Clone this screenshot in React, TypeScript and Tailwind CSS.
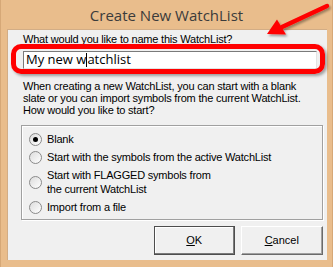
import React from "react";

const options = [
  { label: ["Blank"], checked: true },
  { label: ["Start with the symbols from the active WatchList"], checked: false },
  { label: ["Start with FLAGGED symbols from", "the current WatchList"], checked: false },
  { label: ["Import from a file"], checked: false },
];

function Radio({ checked }: { checked: boolean }) {
  return (
    <span className="flex h-[13px] w-[13px] shrink-0 items-center justify-center rounded-full border border-[#8a8a8a] bg-gradient-to-br from-[#dcdcdc] to-white">
      {checked && <span className="h-[5px] w-[5px] rounded-full bg-black" />}
    </span>
  );
}

export default function App() {
  return (
    <div className="relative h-[267px] w-[333px] overflow-hidden border-l border-r border-[#d6a877] bg-[#e9bd8c] font-['Liberation_Sans',sans-serif] text-[11px] tracking-[-0.2px] text-black">
      {/* Title bar */}
      <div className="flex h-[29px] items-center justify-center pt-[1px] font-['Open_Sans',sans-serif] text-[15px] tracking-normal text-[#3b3b3b]">
        Create New WatchList
      </div>

      {/* Dialog body */}
      <div className="relative ml-[6px] h-[231px] w-[320px] border-l border-t border-[#d2ad86] bg-[#f0f0f0] pl-[15px] pr-[4px] pt-[3px]">
        <div className="leading-[13px]">What would you like to name this WatchList?</div>

        <div className="mt-[5px] flex h-[18px] w-[294px] items-center border border-[#7a7a7a] border-b-[#e3e3e3] border-r-[#e3e3e3] bg-white pl-[2px] font-['Open_Sans',sans-serif] text-[13px] tracking-normal">
          <span>My new w</span>
          <span className="h-[14px] w-[1px] bg-black" />
          <span>atchlist</span>
        </div>

        <div className="mt-[11px] leading-[12px]">
          <div>When creating a new WatchList, you can start with a blank</div>
          <div>slate or you can import symbols from the current WatchList.</div>
          <div>How would you like to start?</div>
        </div>

        <div className="ml-[-2px] mt-[9px] h-[95px] w-[302px] border border-[#a0a0a0] shadow-[inset_1px_1px_0_#ffffff,1px_1px_0_#ffffff] pl-[7px] pt-[6px]">
          <div className="flex flex-col gap-[4px]">
            {options.map((o, i) => (
              <div key={i} className="flex items-center gap-[5px]">
                <Radio checked={o.checked} />
                <div className="leading-[14px]">
                  {o.label.map((l) => (
                    <div key={l}>{l}</div>
                  ))}
                </div>
              </div>
            ))}
          </div>
        </div>

        <div className="mt-[6px] flex gap-[6px] pl-[131px] tracking-normal">
          <button className="flex h-[29px] w-[81px] items-center justify-center border border-[#4d4d4d] bg-[#f0f0f0] shadow-[inset_-1px_-1px_0_#7a7a7a,inset_1px_1px_0_#ffffff]">
            <span>
              <span className="underline">O</span>K
            </span>
          </button>
          <button className="flex h-[29px] w-[83px] items-center justify-center border border-[#ffffff] border-b-[#6a6a6a] border-r-[#6a6a6a] bg-[#f0f0f0] shadow-[inset_-1px_-1px_0_#a0a0a0]">
            <span>
              <span className="underline">C</span>ancel
            </span>
          </button>
        </div>

        {/* Red highlight ring */}
        <div className="absolute left-[3px] top-[14px] h-[30px] w-[314px] rounded-[10px] border-[5px] border-[#ff0000] shadow-[2px_2px_3px_rgba(0,0,0,0.35)]" />
      </div>

      {/* Red arrow */}
      <svg className="absolute left-0 top-0" width="333" height="40" viewBox="0 0 333 40">
        <defs>
          <filter id="sh" x="-20%" y="-20%" width="140%" height="160%">
            <feDropShadow dx="1.5" dy="2" stdDeviation="1.2" floodColor="#000" floodOpacity="0.35" />
          </filter>
        </defs>
        <g filter="url(#sh)">
          <line x1="326" y1="6" x2="281" y2="27" stroke="#ff0000" strokeWidth="4.5" strokeLinecap="round" />
          <polygon points="266,34 276,19.5 285,34.5" fill="#ff0000" />
        </g>
      </svg>
    </div>
  );
}
